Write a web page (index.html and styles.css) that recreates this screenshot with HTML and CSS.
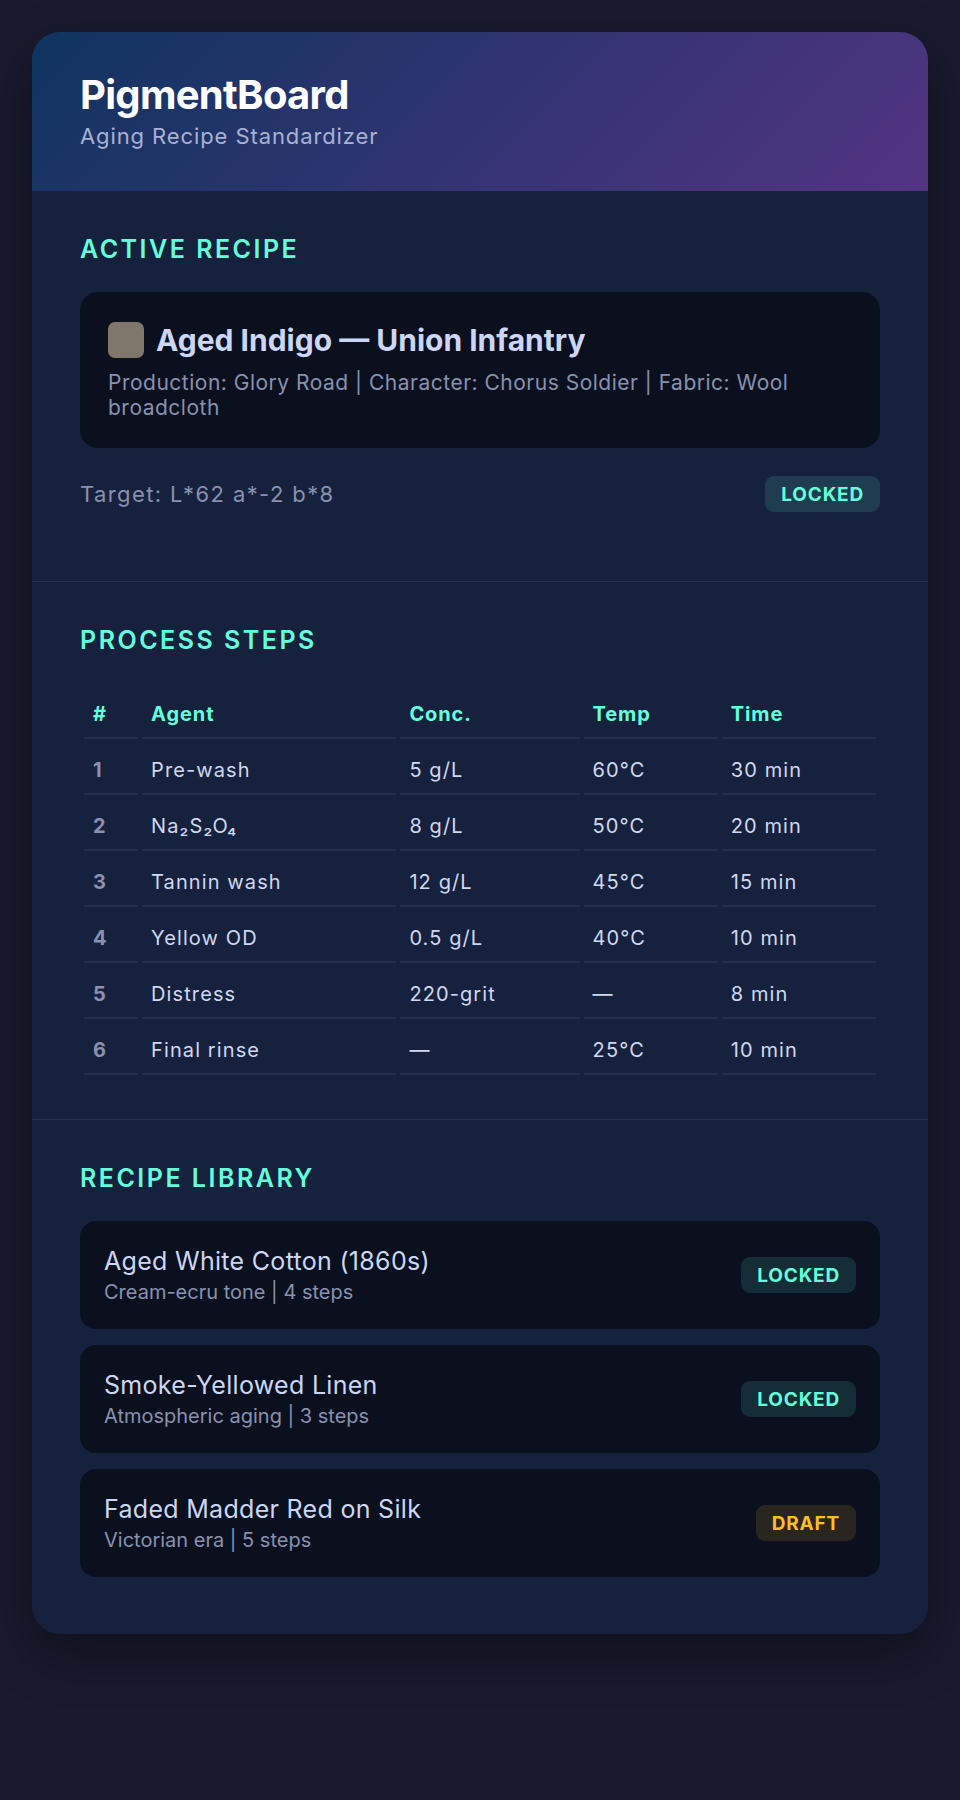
FILE: index.html
```html
<!DOCTYPE html>
<html lang="en">
<head>
<meta charset="utf-8">
<title>PigmentBoard</title>
<link rel="stylesheet" href="styles.css">
</head>
<body>
<main class="board">
  <header class="board-header">
    <h1 class="brand">PigmentBoard</h1>
    <p class="tagline">Aging Recipe Standardizer</p>
  </header>

  <section class="panel panel-active">
    <h2 class="panel-title">Active Recipe</h2>
    <div class="recipe-card">
      <div class="recipe-head">
        <span class="swatch"></span>
        <h3 class="recipe-name">Aged Indigo — Union Infantry</h3>
      </div>
      <p class="recipe-meta">Production: Glory Road | Character: Chorus Soldier | Fabric: Wool broadcloth</p>
    </div>
    <div class="target-row">
      <span class="target">Target: L*62 a*-2 b*8</span>
      <span class="badge badge-locked">LOCKED</span>
    </div>
  </section>

  <section class="panel panel-steps">
    <h2 class="panel-title">Process Steps</h2>
    <table class="steps">
      <thead>
        <tr><th class="col-num">#</th><th class="col-agent">Agent</th><th class="col-conc">Conc.</th><th class="col-temp">Temp</th><th class="col-time">Time</th></tr>
      </thead>
      <tbody>
        <tr><td class="num">1</td><td>Pre-wash</td><td>5 g/L</td><td>60°C</td><td>30 min</td></tr>
        <tr><td class="num">2</td><td>Na₂S₂O₄</td><td>8 g/L</td><td>50°C</td><td>20 min</td></tr>
        <tr><td class="num">3</td><td>Tannin wash</td><td>12 g/L</td><td>45°C</td><td>15 min</td></tr>
        <tr><td class="num">4</td><td>Yellow OD</td><td>0.5 g/L</td><td>40°C</td><td>10 min</td></tr>
        <tr><td class="num">5</td><td>Distress</td><td>220-grit</td><td>—</td><td>8 min</td></tr>
        <tr><td class="num">6</td><td>Final rinse</td><td>—</td><td>25°C</td><td>10 min</td></tr>
      </tbody>
    </table>
  </section>

  <section class="panel panel-library">
    <h2 class="panel-title">Recipe Library</h2>
    <ul class="library">
      <li class="lib-item">
        <div class="lib-text">
          <span class="lib-name">Aged White Cotton (1860s)</span>
          <span class="lib-sub">Cream-ecru tone | 4 steps</span>
        </div>
        <span class="badge badge-locked">LOCKED</span>
      </li>
      <li class="lib-item">
        <div class="lib-text">
          <span class="lib-name">Smoke-Yellowed Linen</span>
          <span class="lib-sub">Atmospheric aging | 3 steps</span>
        </div>
        <span class="badge badge-locked">LOCKED</span>
      </li>
      <li class="lib-item">
        <div class="lib-text">
          <span class="lib-name">Faded Madder Red on Silk</span>
          <span class="lib-sub">Victorian era | 5 steps</span>
        </div>
        <span class="badge badge-draft">DRAFT</span>
      </li>
    </ul>
  </section>
</main>
</body>
</html>
```

FILE: styles.css
```css
* { box-sizing: border-box; }

html, body {
  margin: 0;
  padding: 0;
}

body {
  background: #1a1a2e;
  font-family: Inter, "Noto Sans", "Liberation Sans", sans-serif;
  color: #ccd6f6;
  padding: 32px;
  min-height: 1800px;
}

.board {
  background: #16213e;
  border-radius: 28px;
  overflow: hidden;
  box-shadow: 0 20px 50px rgba(0, 0, 0, 0.4);
}

.board-header {
  background: linear-gradient(135deg, #0f3460 0%, #533483 100%);
  padding: 39px 48px 40px;
}

.brand {
  margin: 0;
  font-size: 40px;
  font-weight: 700;
  color: #ffffff;
  letter-spacing: -0.7px;
  line-height: 48px;
}

.tagline {
  margin: 3px 0 0;
  font-size: 22px;
  letter-spacing: 0.9px;
  color: #a8b2d1;
  line-height: 29px;
}

.panel {
  padding: 43px 48px 48px;
  border-top: 1px solid rgba(136, 146, 176, 0.15);
}

.board-header + .panel { border-top: none; }

.panel-title {
  margin: 0 0 28px;
  font-size: 25px;
  font-weight: 600;
  letter-spacing: 2.5px;
  text-transform: uppercase;
  color: #64ffda;
  line-height: 30px;
}

.recipe-card {
  background: #0b101f;
  border-radius: 18px;
  padding: 28px;
}

.recipe-head {
  display: flex;
  align-items: center;
  gap: 12px;
  height: 40px;
}

.swatch {
  width: 36px;
  height: 36px;
  border-radius: 7px;
  background: #7f786a;
  flex: none;
}

.recipe-name {
  margin: 0;
  font-size: 30px;
  font-weight: 700;
  color: #ccd6f6;
  line-height: 40px;
}

.recipe-meta {
  margin: 10px 0 0;
  font-size: 21px;
  letter-spacing: 0.5px;
  line-height: 25px;
  color: #8892b0;
}

.target-row {
  display: flex;
  justify-content: space-between;
  align-items: center;
  margin-top: 28px;
  margin-bottom: 21px;
}

.target {
  font-size: 22px;
  letter-spacing: 1.4px;
  color: #8892b0;
}

.badge {
  display: inline-flex;
  align-items: center;
  height: 36px;
  font-size: 19px;
  font-weight: 700;
  letter-spacing: 0.8px;
  padding: 0 16px;
  border-radius: 9px;
}

.badge-locked {
  color: #64ffda;
  background: rgba(100, 255, 218, 0.12);
}

.badge-draft {
  color: #fbbf24;
  background: rgba(251, 191, 36, 0.13);
}

.panel-steps { padding-bottom: 44px; }

.steps {
  width: 800px;
  border-collapse: separate;
  border-spacing: 4px 0;
  font-size: 20px;
}

.steps th,
.steps td {
  text-align: left;
  padding: 19px 9px 11px;
  line-height: 24px;
  border-bottom: 2px solid #242f4d;
}

.steps th {
  color: #64ffda;
  font-weight: 700;
  letter-spacing: 0.9px;
}

.steps td {
  color: #d0d8f2;
  letter-spacing: 1.1px;
}

.steps td.num {
  color: #8892b0;
  font-weight: 700;
}

.col-num { width: 54px; }
.col-agent { width: 254px; }
.col-conc { width: 179px; }
.col-temp { width: 134px; }
.col-time { width: 154px; }

.panel-library { padding-bottom: 57px; }

.library {
  list-style: none;
  margin: 0;
  padding: 0;
  display: flex;
  flex-direction: column;
  gap: 16px;
}

.lib-item {
  background: #0b101f;
  border-radius: 16px;
  padding: 24px;
  display: flex;
  align-items: center;
  justify-content: space-between;
}

.lib-text {
  display: flex;
  flex-direction: column;
}

.lib-name {
  font-size: 25px;
  letter-spacing: 0.3px;
  color: #ccd6f6;
  line-height: 32px;
}

.lib-sub {
  margin-top: 3px;
  font-size: 20px;
  color: #8892b0;
  line-height: 25px;
}
```
